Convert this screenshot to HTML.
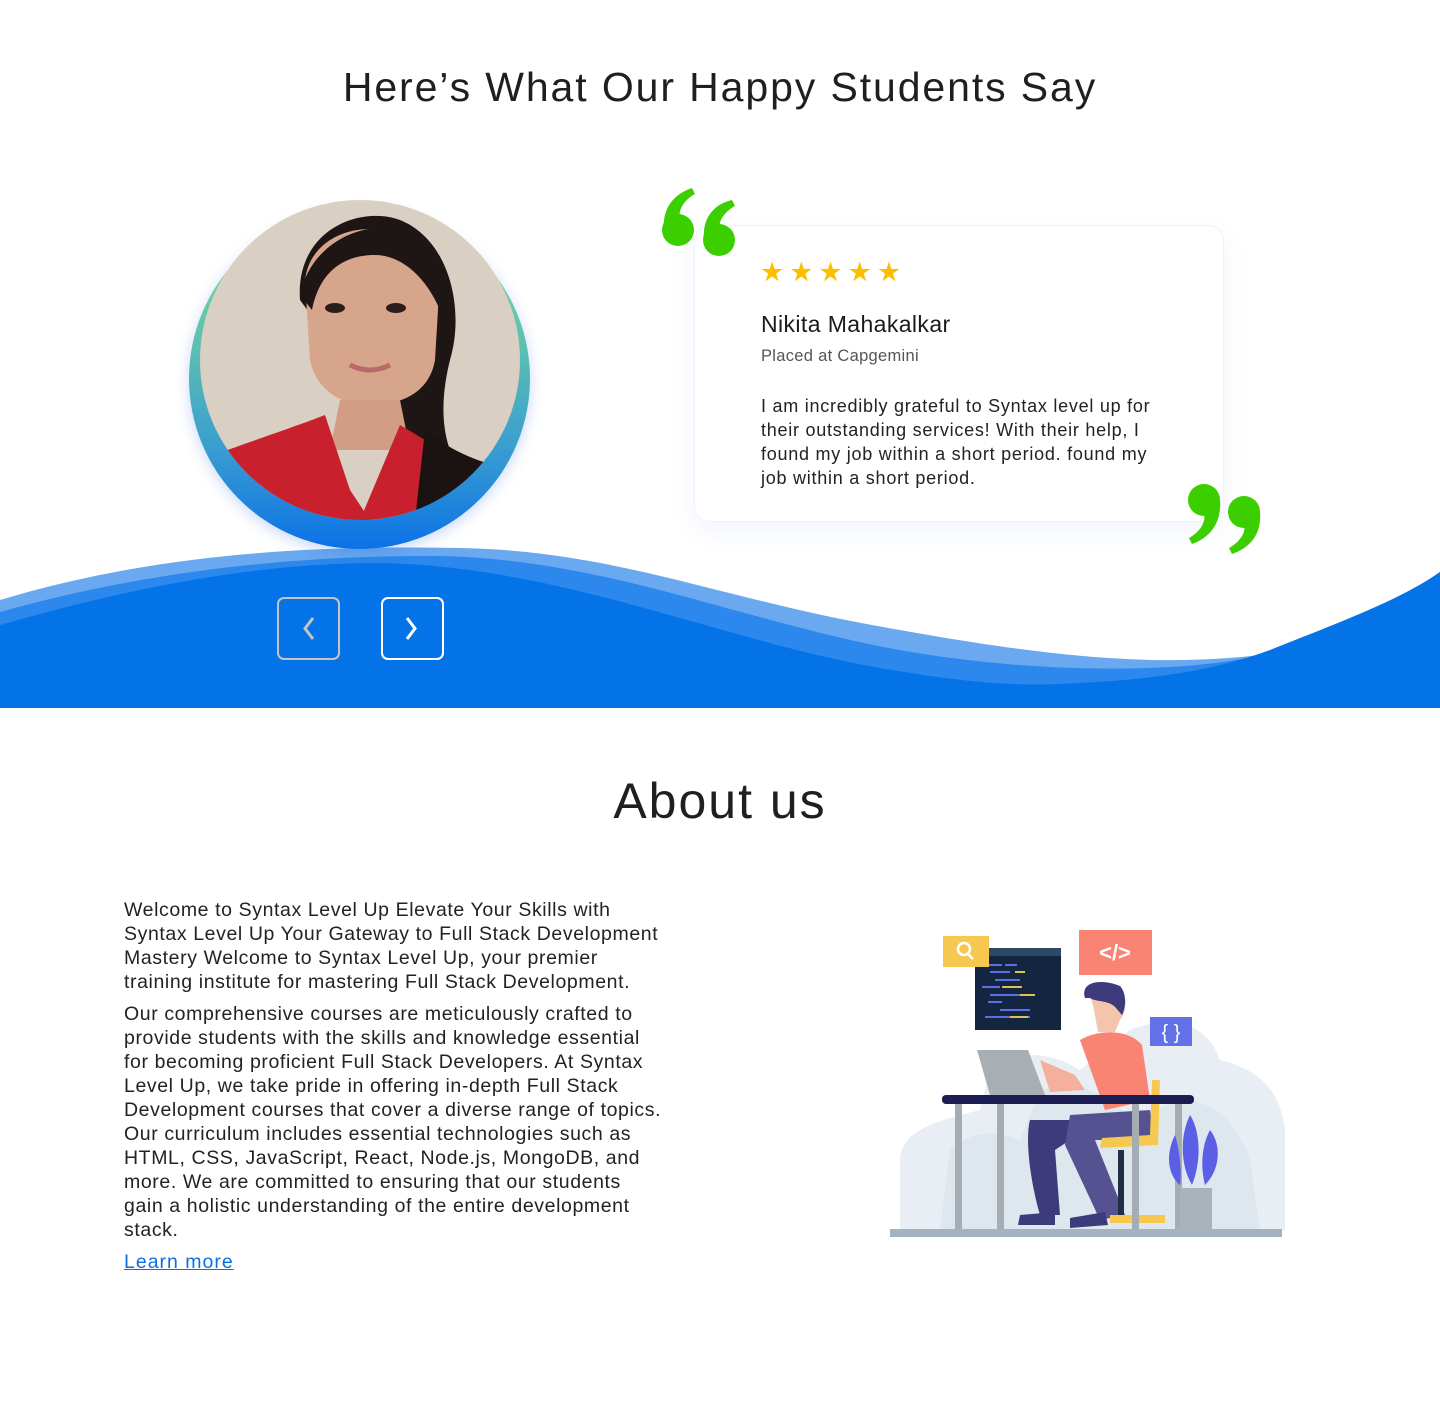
<!DOCTYPE html>
<html><head><meta charset="utf-8">
<style>
*{margin:0;padding:0;box-sizing:border-box}
body{width:1440px;height:1420px;background:#fff;font-family:"Liberation Sans",sans-serif;position:relative;overflow:hidden;color:#222}
.abs{position:absolute}
h1{position:absolute;left:0;width:1440px;text-align:center;font-weight:400;color:#1f1f1f}
.card{left:694px;top:225px;width:530px;height:297px;background:#fff;border-radius:16px;border:1px solid #eef3fb;box-shadow:0 8px 24px rgba(60,110,200,.08)}
.name{left:761px;top:311px;font-size:23px;color:#1a1a1a;letter-spacing:.4px}
.placed{left:761px;top:347px;font-size:16.5px;color:#555;letter-spacing:.3px}
.quote{left:761px;top:394px;font-size:18px;line-height:24px;color:#222;white-space:nowrap;letter-spacing:.75px}
.stars{left:760px;top:257px;font-size:27px;color:#fbbf00;letter-spacing:5px}
.btn{top:597px;width:63px;height:63px;border-radius:7px;border:2px solid #fff}
.about{left:124px;top:898px;font-size:19.5px;line-height:24px;color:#222;white-space:nowrap;letter-spacing:.6px}
.about a{color:#0a6fe0;text-decoration:underline;letter-spacing:1px}
</style></head><body>
<h1 style="top:64px;font-size:41px;letter-spacing:1.9px">Here’s What Our Happy Students Say</h1>

<!-- wave -->
<svg class="abs" style="left:0;top:540px" width="1440" height="170" viewBox="0 540 1440 170">
<path d="M0 600 C150 555 300 545 460 548 C620 551 720 600 900 630 C1040 655 1150 668 1260 655 L1440 708 L0 708Z" fill="#6aa9f0"/>
<path d="M0 612 C150 570 300 555 440 556 C620 560 760 630 930 655 C1030 670 1120 670 1170 667 C1220 664 1250 658 1260 654 C1340 628 1400 600 1440 572 L1440 708 L0 708Z" fill="#2c88ec"/>
<path d="M0 625 C140 585 260 563 380 563 C560 566 720 640 880 668 C960 682 1010 686 1060 684 C1150 680 1210 672 1270 650 C1340 622 1400 600 1440 572 L1440 708 L0 708Z" fill="#0573e8"/>
</svg>

<!-- photo -->
<div class="abs" style="left:189px;top:208px;width:341px;height:341px;border-radius:50%;background:linear-gradient(180deg,#7fe0a0 0%,#5cc0b0 40%,#3a9ed0 70%,#0b72e6 100%);box-shadow:0 4px 14px rgba(40,100,220,.25)"></div>
<svg class="abs" style="left:200px;top:200px" width="320" height="320" viewBox="0 0 320 320">
<defs><clipPath id="c"><circle cx="160" cy="160" r="160"/></clipPath></defs>
<g clip-path="url(#c)">
<rect width="320" height="320" fill="#d9cfc3"/>
<path d="M100 100 C95 30 160 5 200 20 C250 40 265 110 250 160 C240 200 240 240 260 270 L300 310 L220 320 L210 250Z" fill="#1d1615"/>
<path d="M105 80 C110 40 150 25 180 30 C215 35 240 60 238 110 L235 160 C230 190 205 205 170 205 C135 205 115 185 110 160Z" fill="#d7a48c"/>
<path d="M100 95 C110 45 160 20 200 30 C230 40 245 75 240 110 C225 75 200 55 175 55 C145 55 120 70 112 110Z" fill="#1d1615"/>
<ellipse cx="135" cy="108" rx="10" ry="5" fill="#2b1d1a"/><ellipse cx="196" cy="108" rx="10" ry="5" fill="#2b1d1a"/>
<path d="M150 165 Q170 175 190 165" stroke="#b86a68" stroke-width="5" fill="none"/>
<path d="M140 200 L200 200 L210 250 L130 250Z" fill="#d39c85"/>
<path d="M0 260 C40 245 100 225 125 215 L150 290 L170 320 L0 320Z" fill="#c8212d"/>
<path d="M200 225 L225 240 L220 320 L160 320Z" fill="#c8212d"/>
<path d="M225 230 C250 250 280 265 320 270 L320 320 L215 320Z" fill="#1a1312"/>
</g></svg>

<!-- card -->
<div class="abs card"></div>
<div class="abs stars">★★★★★</div>
<div class="abs name">Nikita Mahakalkar</div>
<div class="abs placed">Placed at Capgemini</div>
<div class="abs quote">I am incredibly grateful to Syntax level up for<br>their outstanding services! With their help, I<br>found my job within a short period. found my<br>job within a short period.</div>

<!-- quotes -->
<svg class="abs" style="left:662px;top:188px" width="76" height="70" viewBox="0 0 76 70">
<g fill="#3ccf00">
<circle cx="16" cy="42" r="16"/><path d="M2 42 C0 20 12 6 30 0 L33 6 C22 12 16 22 18 30Z"/>
<circle cx="57" cy="52" r="16"/><path d="M42 52 C40 30 52 16 70 12 L73 18 C62 24 56 34 58 40Z"/>
</g></svg>
<svg class="abs" style="left:1186px;top:482px" width="78" height="72" viewBox="0 0 78 72">
<g fill="#3ccf00">
<circle cx="18" cy="18" r="16"/><path d="M34 18 C36 40 24 56 6 62 L3 56 C14 50 20 40 18 32Z"/>
<circle cx="58" cy="30" r="16"/><path d="M74 30 C76 52 64 66 46 72 L43 66 C54 60 60 50 58 44Z"/>
</g></svg>

<!-- buttons -->
<div class="abs btn" style="left:277px;border-color:#c4c4c4"></div>
<svg class="abs" style="left:277px;top:597px" width="63" height="63"><path d="M36 21 L28 31.5 L36 42" stroke="#c4c4c4" stroke-width="3" fill="none"/></svg>
<div class="abs btn" style="left:381px"></div>
<svg class="abs" style="left:381px;top:597px" width="63" height="63"><path d="M26 21 L34 31.5 L26 42" stroke="#fff" stroke-width="3" fill="none"/></svg>

<h1 style="top:772px;font-size:50px;letter-spacing:2px">About us</h1>

<div class="abs about">Welcome to Syntax Level Up Elevate Your Skills with<br>Syntax Level Up Your Gateway to Full Stack Development<br>Mastery Welcome to Syntax Level Up, your premier<br>training institute for mastering Full Stack Development.<div style="height:8px"></div>Our comprehensive courses are meticulously crafted to<br>provide students with the skills and knowledge essential<br>for becoming proficient Full Stack Developers. At Syntax<br>Level Up, we take pride in offering in-depth Full Stack<br>Development courses that cover a diverse range of topics.<br>Our curriculum includes essential technologies such as<br>HTML, CSS, JavaScript, React, Node.js, MongoDB, and<br>more. We are committed to ensuring that our students<br>gain a holistic understanding of the entire development<br>stack.<div style="height:8px"></div><a>Learn more</a></div>

<!-- illustration -->
<svg class="abs" style="left:880px;top:920px" width="420" height="330" viewBox="0 0 420 330">
<path d="M20 310 L20 240 C20 210 60 200 100 190 L110 150 C130 130 170 130 200 150 L250 110 C300 90 330 110 340 140 C380 150 400 170 405 210 L405 310Z" fill="#e8eef3"/>
<path d="M60 310 L70 230 C90 210 120 210 140 220 L160 170 C190 160 230 170 250 200 L300 180 C340 180 360 210 370 240 L380 310Z" fill="#dfe7ee"/>
<rect x="95" y="28" width="86" height="82" fill="#14263f"/>
<rect x="95" y="28" width="86" height="8" fill="#2d4a64"/>
<g stroke-width="2"><path d="M108 45h14M125 45h12M110 52h20M115 60h25M102 67h18M110 75h30M108 82h14M120 90h30M105 97h45" stroke="#5b6ee8"/><path d="M135 52h10M122 67h20M140 75h15M130 97h18" stroke="#e0c050"/></g>
<rect x="63" y="16" width="46" height="31" fill="#f7c84f"/>
<circle cx="84" cy="29" r="6" stroke="#fff" stroke-width="2.5" fill="none"/><path d="M88 34l5 5" stroke="#fff" stroke-width="2.5"/>
<rect x="199" y="10" width="73" height="45" fill="#f98474"/>
<text x="235" y="40" font-family="Liberation Sans" font-size="22" font-weight="bold" fill="#fff" text-anchor="middle">&lt;/&gt;</text>
<rect x="270" y="97" width="42" height="29" fill="#6271e8"/>
<text x="291" y="119" font-family="Liberation Sans" font-size="20" fill="#fff" text-anchor="middle">{ }</text>
<path d="M97 130 L148 130 L165 175 L110 175Z" fill="#a7aeb4"/>
<path d="M213 85 C205 65 220 60 235 65 C248 70 248 90 240 100 L235 112 L218 112Z" fill="#f4c5ad"/>
<path d="M205 78 C200 62 220 58 240 66 C248 75 245 90 242 95 L236 88 C230 80 215 82 210 78Z" fill="#3d3b7b"/>
<path d="M200 120 C220 108 250 110 262 125 L270 180 L225 190Z" fill="#f98474"/>
<path d="M160 140 L195 155 L205 170 L170 172Z" fill="#f4b09a"/>
<path d="M150 200 C145 220 150 260 160 295 L180 295 L175 230 L220 200Z" fill="#3d3b7b"/>
<path d="M190 195 L270 190 L275 220 L215 220 L245 295 L220 300 L185 225Z" fill="#565190"/>
<path d="M140 295 L175 292 L175 305 L138 305Z M190 298 L225 292 L228 305 L190 308Z" fill="#3d3b7b"/>
<path d="M272 160 L280 160 L278 225 L220 228 L222 218 L270 215Z" fill="#f7c84f"/>
<rect x="238" y="230" width="6" height="70" fill="#1f2f44"/>
<rect x="230" y="295" width="55" height="8" fill="#f7c84f"/>
<rect x="62" y="175" width="252" height="9" rx="4" fill="#1c1d52"/>
<rect x="75" y="184" width="7" height="126" fill="#a5adb3"/><rect x="117" y="184" width="7" height="126" fill="#a5adb3"/>
<rect x="252" y="184" width="7" height="126" fill="#a5adb3"/><rect x="295" y="184" width="7" height="126" fill="#a5adb3"/>
<path d="M310 195 C320 210 322 240 312 265 C300 245 300 215 310 195Z M295 215 C300 230 302 255 300 265 C288 255 285 235 295 215Z M330 210 C342 225 340 250 325 265 C320 245 322 225 330 210Z" fill="#5b5fe6"/>
<rect x="300" y="268" width="32" height="42" fill="#a9b3bb"/>
<rect x="10" y="309" width="392" height="8" fill="#a5b3c0"/>
</svg>
</body></html>
